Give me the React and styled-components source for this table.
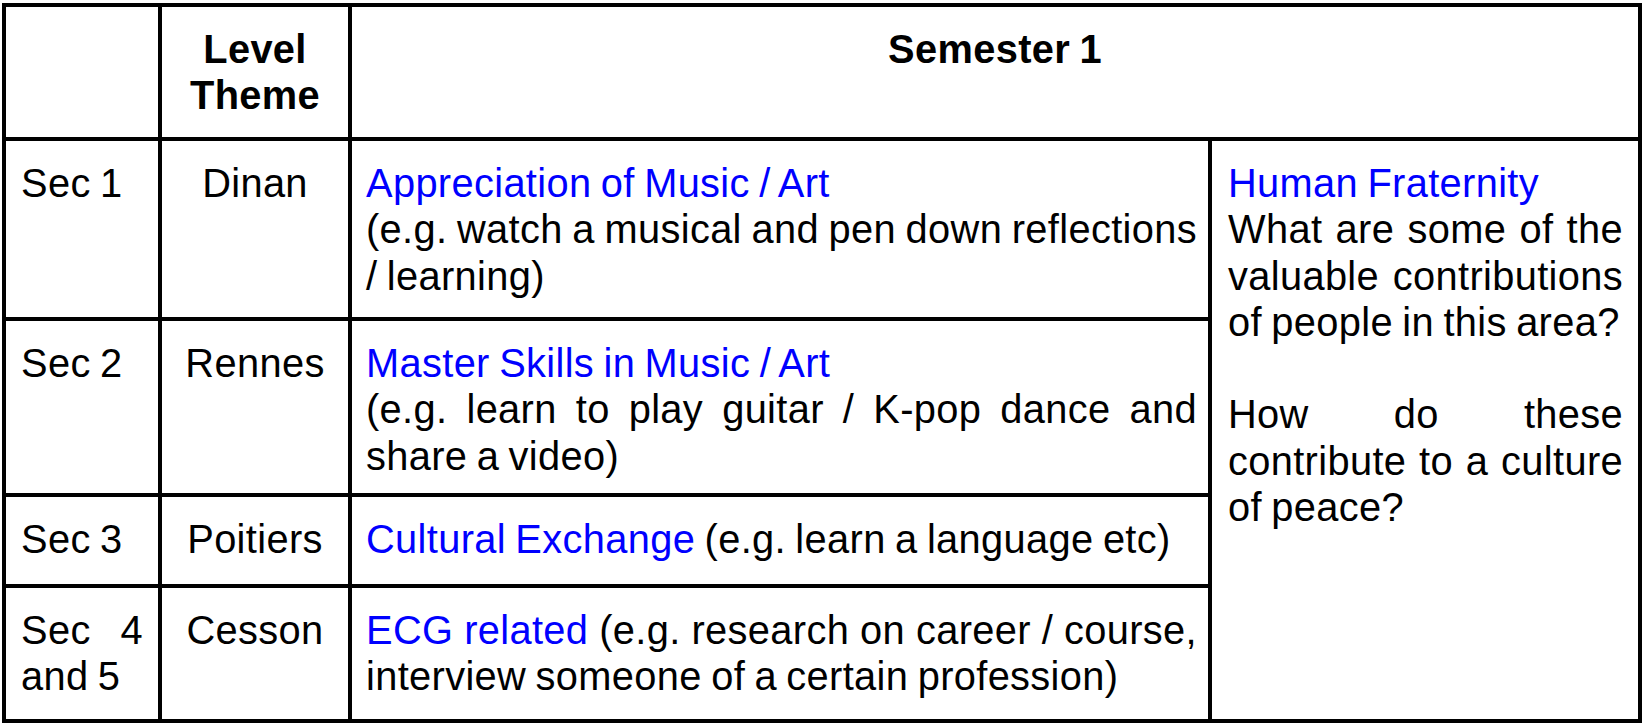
import React from "react";
import styled, { createGlobalStyle } from "styled-components";

const GlobalStyle = createGlobalStyle`
  html, body {
    margin: 0;
    padding: 0;
    background: #ffffff;
  }
  body {
    font-family: "Liberation Sans", Arial, Helvetica, sans-serif;
    color: #000000;
  }
`;

const Page = styled.div`
  padding: 3px 0 0 2px;
`;

const Grid = styled.div`
  display: grid;
  width: fit-content;
  grid-template-columns: 152px 186px 856px 426px;
  grid-template-rows: 130px 176px 172px 87px 131px;
  gap: 4px;
  padding: 4px;
  background: #000000;
`;

const Cell = styled.div`
  background: #ffffff;
  box-sizing: border-box;
  font-size: 39.8px;
  line-height: 46.3px;
  letter-spacing: 0.35px;
  word-spacing: -2px;
  padding: 19px ${(p) => p.$padR ?? 16}px 0 ${(p) => p.$padL ?? 16}px;
  text-align: ${(p) => p.$align || "justify"};
  font-weight: ${(p) => (p.$bold ? 700 : 400)};
  grid-column: ${(p) => p.$col || "auto"};
  grid-row: ${(p) => p.$row || "auto"};
`;

const Title = styled.span`
  color: #0000ff;
  display: ${(p) => (p.$block ? "block" : "inline")};
`;

const Paragraph = styled.p`
  margin: 0 0 ${(p) => (p.$gap ? "46.3px" : "0")} 0;
`;

const rows = [
  {
    level: "Sec 1",
    theme: "Dinan",
    title: "Appreciation of Music / Art",
    block: true,
    detail: "(e.g. watch a musical and pen down reflections / learning)",
  },
  {
    level: "Sec 2",
    theme: "Rennes",
    title: "Master Skills in Music / Art",
    block: true,
    detail: "(e.g. learn to play guitar / K-pop dance and share a video)",
  },
  {
    level: "Sec 3",
    theme: "Poitiers",
    title: "Cultural Exchange",
    block: false,
    detail: "(e.g. learn a language etc)",
  },
  {
    level: "Sec 4 and 5",
    theme: "Cesson",
    title: "ECG related",
    block: false,
    detail:
      "(e.g. research on career / course, interview someone of a certain profession)",
  },
];

export default function App() {
  return (
    <>
      <GlobalStyle />
      <Page>
        <Grid>
          <Cell $col="1" $row="1" />
          <Cell $col="2" $row="1" $align="center" $bold $padL={10} $padR={10}>
            Level Theme
          </Cell>
          <Cell $col="3 / span 2" $row="1" $align="center" $bold>
            Semester 1
          </Cell>

          {rows.map((r, i) => (
            <React.Fragment key={r.level}>
              <Cell $col="1" $row={String(i + 2)} $padL={15} $padR={15}>
                {r.level}
              </Cell>
              <Cell
                $col="2"
                $row={String(i + 2)}
                $align="center"
                $padL={10}
                $padR={10}
              >
                {r.theme}
              </Cell>
              <Cell $col="3" $row={String(i + 2)} $padL={14} $padR={11}>
                <Title $block={r.block}>{r.title}</Title>
                {r.block ? "" : " "}
                {r.detail}
              </Cell>
            </React.Fragment>
          ))}

          <Cell $col="4" $row="2 / span 4" $padL={16} $padR={15}>
            <Title $block>Human Fraternity</Title>
            <Paragraph $gap>
              What are some of the valuable contributions of people in this
              area?
            </Paragraph>
            <Paragraph>
              How do these contribute to a culture of peace?
            </Paragraph>
          </Cell>
        </Grid>
      </Page>
    </>
  );
}
